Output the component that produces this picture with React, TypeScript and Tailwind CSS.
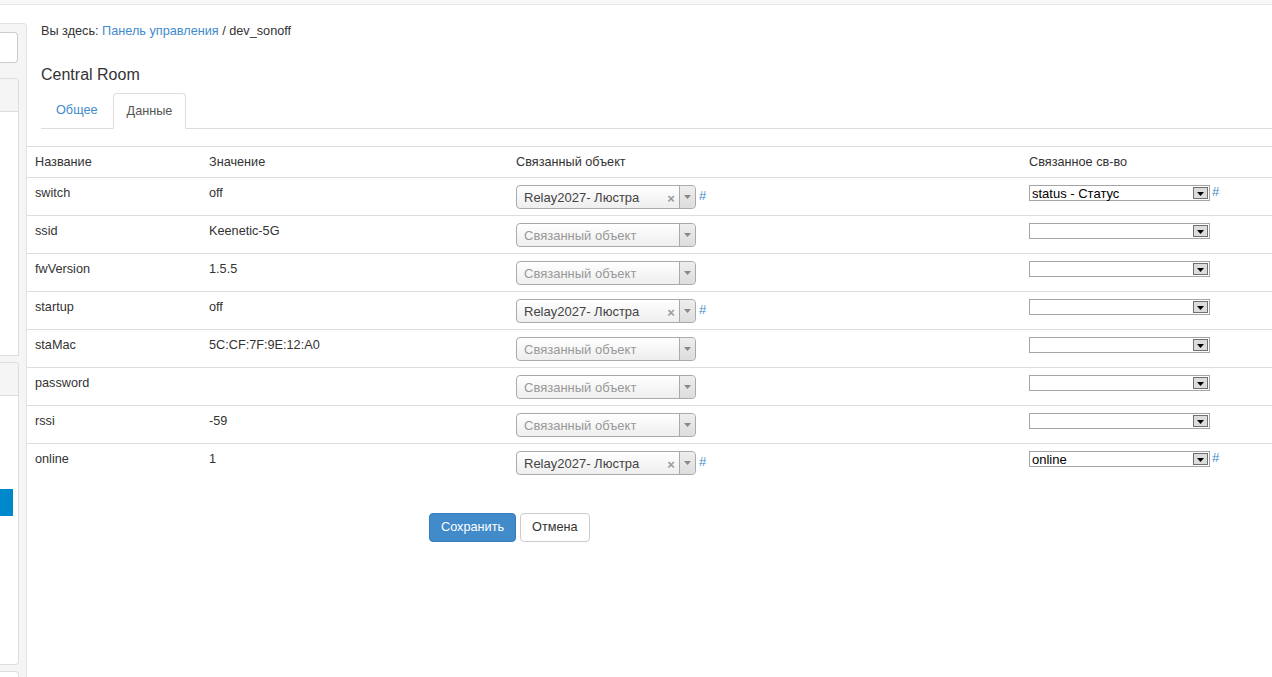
import React from 'react';

// Страница свойств устройства dev_sonoff
interface DataRow {
    name: string;
    value: string;
    linked: string | null;
    prop: string | null;
    propHash: boolean;
}

const rows: DataRow[] = [
    { name: 'switch', value: 'off', linked: 'Relay2027- Люстра', prop: 'status - Статус', propHash: true },
    { name: 'ssid', value: 'Keenetic-5G', linked: null, prop: '', propHash: false },
    { name: 'fwVersion', value: '1.5.5', linked: null, prop: '', propHash: false },
    { name: 'startup', value: 'off', linked: 'Relay2027- Люстра', prop: '', propHash: false },
    { name: 'staMac', value: '5C:CF:7F:9E:12:A0', linked: null, prop: '', propHash: false },
    { name: 'password', value: '', linked: null, prop: '', propHash: false },
    { name: 'rssi', value: '-59', linked: null, prop: '', propHash: false },
    { name: 'online', value: '1', linked: 'Relay2027- Люстра', prop: 'online', propHash: true },
];

const Select2Box: React.FC<{ value: string | null }> = ({ value }) => (
    <div className="flex items-center">
        <div className="flex h-[24px] w-[180px] items-stretch rounded-[4px] border border-[#aaaaaa] bg-gradient-to-b from-white to-[#eeeeee]">
            <div className={`flex flex-1 items-center pl-[7px] text-[13px] leading-none ${value ? 'text-[#444]' : 'text-[#999]'}`}>
                {value ?? 'Связанный объект'}
            </div>
            {value && (
                <div className="flex w-[16px] items-center justify-center pt-[2px] text-[13px] font-bold leading-none text-[#999]">×</div>
            )}
            <div className="flex w-[16px] items-center justify-center rounded-r-[4px] border-l border-[#aaaaaa] bg-gradient-to-b from-[#eeeeee] to-[#dddddd]">
                <svg width="7" height="4" viewBox="0 0 7 4"><path d="M0 0h7L3.5 4z" fill="#888" /></svg>
            </div>
        </div>
        {value && <a className="ml-[3px] -mt-[3px] text-[13px] text-[#428bca]">#</a>}
    </div>
);

const NativeSelect: React.FC<{ value: string; hash: boolean }> = ({ value, hash }) => (
    <div className="flex items-start">
        <div className="flex h-[16px] w-[181px] items-stretch border border-[#a5a5a5] bg-white">
            <div className="flex flex-1 items-center pl-[2px] text-[13px] leading-none text-black">{value}</div>
            <div className="m-[1px] flex w-[15px] items-end justify-center border border-[#707070] bg-[#dcdcdc] pb-[2px]">
                <svg width="7" height="4" viewBox="0 0 7 4"><path d="M0 0h7L3.5 4z" fill="#000" /></svg>
            </div>
        </div>
        {hash && <a className="ml-[2px] -mt-[2px] text-[13px] leading-[18px] text-[#428bca]">#</a>}
    </div>
);

const Sidebar: React.FC = () => (
    <div className="mt-[18px] flex w-[27px] shrink-0 flex-col rounded-tr-[4px] border-r border-t border-[#e3e3e3] bg-[#f5f5f5]">
        <div className="mt-[8px] h-[31px] w-[18px] shrink-0 rounded-r-[4px] border border-l-0 border-[#cccccc] bg-white" />
        <div className="mt-[15px] h-[278px] w-[19px] shrink-0 overflow-hidden rounded-tr-[4px] border border-l-0 border-[#dddddd] bg-white">
            <div className="h-[33px] border-b border-[#dddddd] bg-[#f5f5f5]" />
        </div>
        <div className="mt-[6px] h-[303px] w-[19px] shrink-0 overflow-hidden rounded-r-[4px] border border-l-0 border-[#dddddd] bg-white">
            <div className="h-[33px] border-b border-[#dddddd] bg-[#f5f5f5]" />
            <div className="mt-[93px] h-[27px] w-[13px] bg-[#0088cc]" />
        </div>
        <div className="mt-[6px] h-[20px] w-[19px] shrink-0 rounded-tr-[4px] border border-l-0 border-[#dddddd] bg-white" />
    </div>
);

export default function App() {
    return (
        <div className="h-[677px] w-[1272px] overflow-hidden bg-white font-['Liberation_Sans',Arial,sans-serif] text-[12.7px] text-[#333]">
            <div className="h-[5px] border-b border-[#e7e7e7] bg-[#f8f8f8]" />
            <div className="flex h-[672px] overflow-hidden">
                <Sidebar />
                <div className="flex-1">
                    <div className="pl-[14px] pt-[17px]">
                        <div className="leading-[18px]">
                            Вы здесь: <a className="text-[#428bca]">Панель управления</a> / dev_sonoff
                        </div>
                        <h3 className="mt-[25px] text-[16px] leading-[20px]">Central Room</h3>
                        <div className="mt-[8px] flex border-b border-[#dddddd]">
                            <a className="px-[15px] py-[9px] leading-[17px] text-[#428bca]">Общее</a>
                            <div className="-mb-px rounded-t-[4px] border border-b-white border-[#dddddd] bg-white px-[13px] py-[8px] leading-[18px] text-[#555]">
                                Данные
                            </div>
                        </div>
                    </div>
                    <table className="mt-[17px] w-full border-collapse">
                        <thead>
                            <tr className="border-t border-[#dddddd]">
                                <th className="w-[174px] px-[8px] pb-[6px] pt-[6px] text-left font-normal leading-[18px]">Название</th>
                                <th className="w-[307px] px-[8px] pb-[6px] pt-[6px] text-left font-normal leading-[18px]">Значение</th>
                                <th className="w-[513px] px-[8px] pb-[6px] pt-[6px] text-left font-normal leading-[18px]">Связанный объект</th>
                                <th className="px-[8px] pb-[6px] pt-[6px] text-left font-normal leading-[18px]">Связанное св-во</th>
                            </tr>
                        </thead>
                        <tbody>
                            {rows.map(r => (
                                <tr key={r.name} className="border-t border-[#dddddd] align-top">
                                    <td className="px-[8px] pb-[6px] pt-[6px] leading-[18px]">{r.name}</td>
                                    <td className="px-[8px] pb-[6px] pt-[6px] leading-[18px]">{r.value}</td>
                                    <td className="px-[8px] pb-[6px] pt-[7px]">
                                        <Select2Box value={r.linked} />
                                    </td>
                                    <td className="px-[8px] pb-[6px] pt-[7px]">
                                        <NativeSelect value={r.prop ?? ''} hash={r.propHash} />
                                    </td>
                                </tr>
                            ))}
                        </tbody>
                    </table>
                    <div className="mt-[32px] flex gap-[4px] pl-[402px]">
                        <button className="h-[29px] rounded-[4px] border border-[#357ebd] bg-[#428bca] px-[11px] text-[12.7px] text-white">Сохранить</button>
                        <button className="h-[29px] rounded-[4px] border border-[#cccccc] bg-white px-[11px] text-[12.7px] text-[#333]">Отмена</button>
                    </div>
                </div>
            </div>
        </div>
    );
}
